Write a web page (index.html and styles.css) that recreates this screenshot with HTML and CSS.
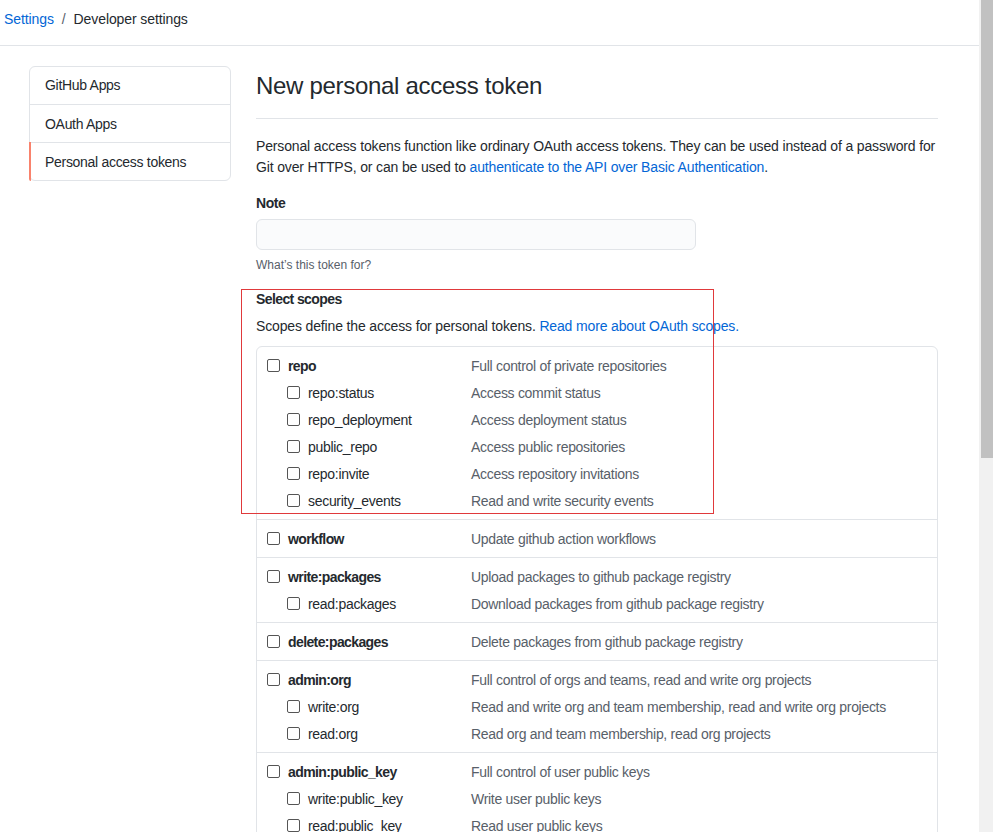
FILE: index.html
```html
<!DOCTYPE html>
<html lang="en">
<head>
<meta charset="utf-8">
<title>New personal access token</title>
<link rel="stylesheet" href="styles.css">
</head>
<body>
<div class="page">
  <header class="topbar">
    <nav class="breadcrumb">
      <a href="#" class="crumb-link">Settings</a>
      <span class="crumb-sep">/</span>
      <span class="crumb-current">Developer settings</span>
    </nav>
  </header>

  <div class="layout">
    <aside class="sidebar">
      <nav class="menu">
        <a href="#" class="menu-item">GitHub Apps</a>
        <a href="#" class="menu-item">OAuth Apps</a>
        <a href="#" class="menu-item is-selected">Personal access tokens</a>
      </nav>
    </aside>

    <main class="content">
      <div class="subhead">
        <h1 class="subhead-title">New personal access token</h1>
      </div>

      <p class="intro">Personal access tokens function like ordinary OAuth access tokens. They can be used instead of a password for Git over HTTPS, or can be used to <a href="#" class="link">authenticate to the API over Basic Authentication</a>.</p>

      <div class="form-group">
        <label class="form-label">Note</label>
        <input type="text" class="form-control">
        <p class="note">What’s this token for?</p>
      </div>

      <div class="scopes">
        <div class="scopes-title">Select scopes</div>
        <p class="scopes-desc">Scopes define the access for personal tokens. <a href="#" class="link">Read more about OAuth scopes.</a></p>

        <div class="scope-list">
          <div class="scope-group">
            <div class="scope-row parent"><span class="scope-name"><span class="cb"></span><strong>repo</strong></span><span class="scope-desc">Full control of private repositories</span></div>
            <div class="scope-row child"><span class="scope-name"><span class="cb"></span>repo:status</span><span class="scope-desc">Access commit status</span></div>
            <div class="scope-row child"><span class="scope-name"><span class="cb"></span>repo_deployment</span><span class="scope-desc">Access deployment status</span></div>
            <div class="scope-row child"><span class="scope-name"><span class="cb"></span>public_repo</span><span class="scope-desc">Access public repositories</span></div>
            <div class="scope-row child"><span class="scope-name"><span class="cb"></span>repo:invite</span><span class="scope-desc">Access repository invitations</span></div>
            <div class="scope-row child"><span class="scope-name"><span class="cb"></span>security_events</span><span class="scope-desc">Read and write security events</span></div>
          </div>
          <div class="scope-group">
            <div class="scope-row parent"><span class="scope-name"><span class="cb"></span><strong>workflow</strong></span><span class="scope-desc">Update github action workflows</span></div>
          </div>
          <div class="scope-group">
            <div class="scope-row parent"><span class="scope-name"><span class="cb"></span><strong>write:packages</strong></span><span class="scope-desc">Upload packages to github package registry</span></div>
            <div class="scope-row child"><span class="scope-name"><span class="cb"></span>read:packages</span><span class="scope-desc">Download packages from github package registry</span></div>
          </div>
          <div class="scope-group">
            <div class="scope-row parent"><span class="scope-name"><span class="cb"></span><strong>delete:packages</strong></span><span class="scope-desc">Delete packages from github package registry</span></div>
          </div>
          <div class="scope-group">
            <div class="scope-row parent"><span class="scope-name"><span class="cb"></span><strong>admin:org</strong></span><span class="scope-desc">Full control of orgs and teams, read and write org projects</span></div>
            <div class="scope-row child"><span class="scope-name"><span class="cb"></span>write:org</span><span class="scope-desc">Read and write org and team membership, read and write org projects</span></div>
            <div class="scope-row child"><span class="scope-name"><span class="cb"></span>read:org</span><span class="scope-desc">Read org and team membership, read org projects</span></div>
          </div>
          <div class="scope-group">
            <div class="scope-row parent"><span class="scope-name"><span class="cb"></span><strong>admin:public_key</strong></span><span class="scope-desc">Full control of user public keys</span></div>
            <div class="scope-row child"><span class="scope-name"><span class="cb"></span>write:public_key</span><span class="scope-desc">Write user public keys</span></div>
            <div class="scope-row child"><span class="scope-name"><span class="cb"></span>read:public_key</span><span class="scope-desc">Read user public keys</span></div>
          </div>
          <div class="scope-group">
            <div class="scope-row parent"><span class="scope-name"><span class="cb"></span><strong>admin:repo_hook</strong></span><span class="scope-desc">Full control of repository hooks</span></div>
            <div class="scope-row child"><span class="scope-name"><span class="cb"></span>write:repo_hook</span><span class="scope-desc">Write repository hooks</span></div>
            <div class="scope-row child"><span class="scope-name"><span class="cb"></span>read:repo_hook</span><span class="scope-desc">Read repository hooks</span></div>
          </div>
        </div>
      </div>
    </main>
  </div>

  <div class="annotation"></div>
</div>

<div class="scrollbar"><div class="scrollbar-thumb"></div></div>
</body>
</html>
```

FILE: styles.css
```css
html, body {
  margin: 0;
  padding: 0;
  overflow: hidden;
  background: #fff;
}

body {
  font-family: "Liberation Sans", Arial, sans-serif;
  font-size: 14px;
  line-height: 21px;
  letter-spacing: -0.3px;
  color: #24292e;
}

.page {
  position: relative;
  width: 979px;
}

a { text-decoration: none; }

.topbar {
  height: 46px;
  border-bottom: 1px solid #e1e4e8;
  box-sizing: border-box;
  padding: 9px 0 0 4px;
}

.breadcrumb {
  display: flex;
  align-items: center;
  font-size: 14px;
  letter-spacing: -0.1px;
}

.crumb-link { color: #0366d6; }
.crumb-sep { color: #586069; margin: 0 8px; }
.crumb-current { color: #24292e; }

.layout {
  display: flex;
  gap: 25px;
  padding: 20px 0 0 29px;
}

.sidebar {
  width: 202px;
  flex: none;
}

.menu {
  border: 1px solid #e1e4e8;
  border-radius: 6px;
  display: flex;
  flex-direction: column;
}

.menu-item {
  position: relative;
  display: block;
  height: 38px;
  box-sizing: border-box;
  padding: 9px 15px 8px;
  color: #24292e;
  border-top: 1px solid #e1e4e8;
}

.menu-item:first-child { border-top: 0; height: 37px; padding-top: 8px; }

.menu-item.is-selected::before {
  content: "";
  position: absolute;
  left: -1px;
  top: -1px;
  bottom: -1px;
  width: 2px;
  background: #f9826c;
  border-bottom-left-radius: 2px;
}

.content {
  width: 682px;
  flex: none;
}

.subhead {
  height: 53px;
  border-bottom: 1px solid #e1e4e8;
  box-sizing: border-box;
}

.subhead-title {
  margin: 0;
  font-size: 24px;
  line-height: 40px;
  font-weight: 400;
  letter-spacing: -0.3px;
  color: #24292e;
}

.intro {
  margin: 17px 0 0;
  letter-spacing: -0.15px;
}

.link { color: #0366d6; }

.form-group {
  margin-top: 15px;
}

.form-label {
  display: block;
  font-weight: 700;
  letter-spacing: -0.4px;
  margin-bottom: 5px;
}

.form-control {
  display: block;
  width: 440px;
  height: 31px;
  box-sizing: border-box;
  border: 1px solid #e1e4e8;
  border-radius: 6px;
  background: #fafbfc;
  font: inherit;
  padding: 0 8px;
  margin: 0;
}

.note {
  margin: 6px 0 0;
  font-size: 12px;
  line-height: 18px;
  letter-spacing: 0;
  color: #586069;
}

.scopes {
  margin-top: 15px;
}

.scopes-title {
  font-weight: 700;
  letter-spacing: -0.6px;
}

.scopes-desc {
  margin: 6px 0 0;
  letter-spacing: -0.15px;
}

.scope-list {
  margin-top: 9px;
  border: 1px solid #e1e4e8;
  border-radius: 6px;
}

.scope-group {
  padding: 6px 0 4px 10px;
  border-top: 1px solid #e1e4e8;
}

.scope-group:first-child { border-top: 0; }

.scope-row {
  display: flex;
  align-items: center;
  height: 27px;
}

.scope-name {
  display: flex;
  align-items: center;
  width: 204px;
  flex: none;
  box-sizing: border-box;
  color: #24292e;
}

.scope-row.child .scope-name { padding-left: 20px; }

.scope-name strong {
  font-weight: 700;
  letter-spacing: -0.6px;
}

.cb {
  width: 13px;
  height: 13px;
  box-sizing: border-box;
  border: 1px solid #555;
  border-radius: 2px;
  background: #fff;
  margin-right: 8px;
  flex: none;
  position: relative;
  top: -1px;
}

.scope-desc {
  color: #586069;
}

.annotation {
  position: absolute;
  left: 241px;
  top: 289px;
  width: 473px;
  height: 225px;
  box-sizing: border-box;
  border: 1px solid #e0393b;
  pointer-events: none;
}

.scrollbar {
  position: fixed;
  top: 0;
  right: 0;
  width: 14px;
  height: 100%;
  background: #f1f1f1;
}

.scrollbar-thumb {
  margin-left: 2px;
  width: 12px;
  height: 458px;
  background: #c1c1c1;
}
```
